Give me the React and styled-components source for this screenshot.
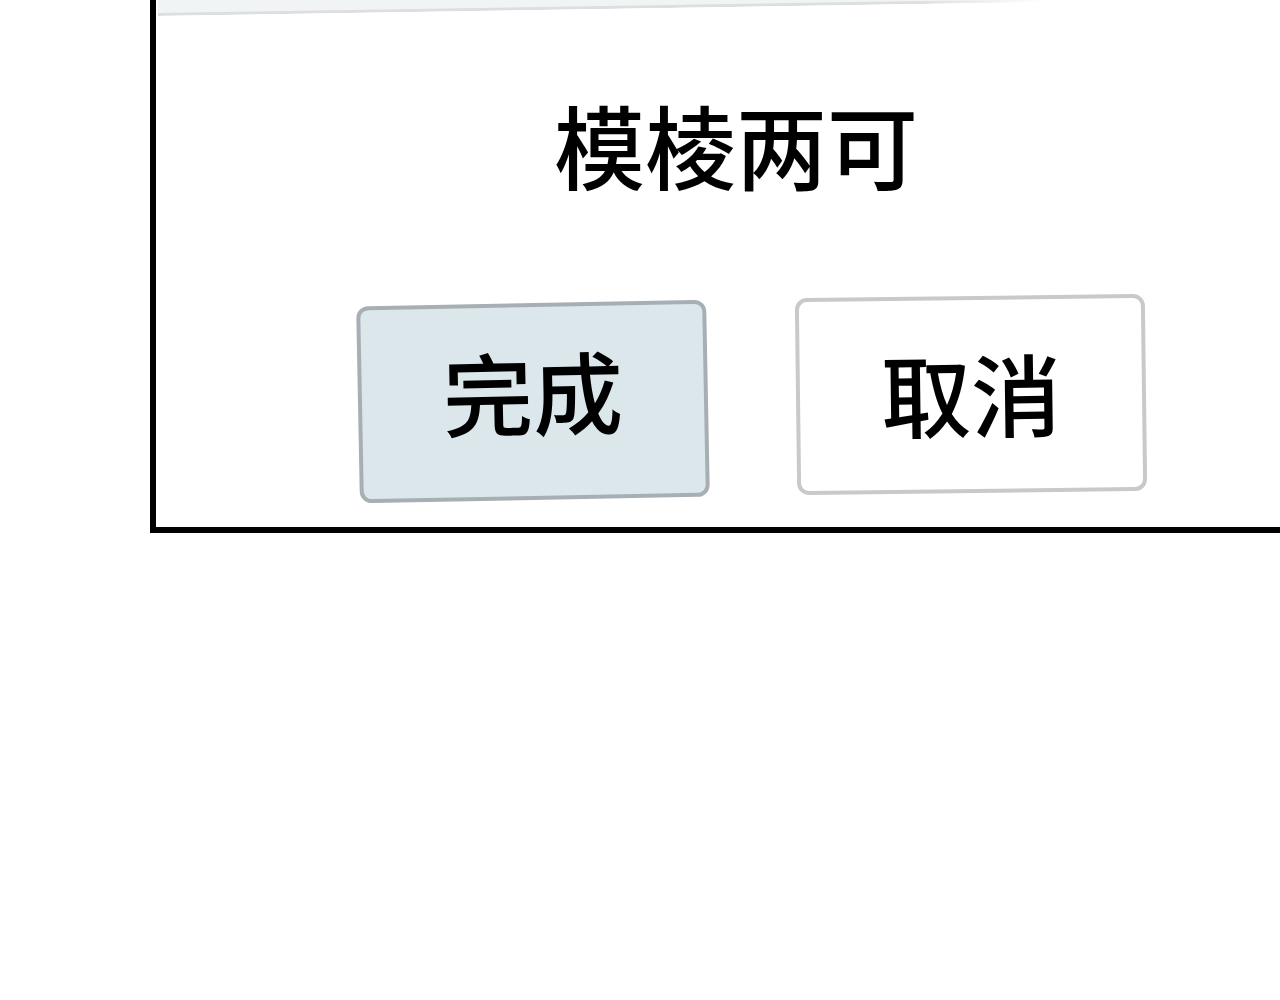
import * as React from "react";
import styled, { createGlobalStyle } from "styled-components";

const GlobalStyle = createGlobalStyle`
  html, body {
    margin: 0;
    padding: 0;
    background: #ffffff;
    overflow: hidden;
  }
  body {
    font-family: "Noto Sans CJK SC", "Noto Sans", sans-serif;
  }
`;

function App() {
  return (
    <>
      <GlobalStyle />
      <Page>
        <Panel>
          {/* bottom edge of the input field above */}
          <FieldEdge />
          <Phrase>模棱两可</Phrase>
          <ButtonRow>
            <ActionButton $primary $tilt={-1.1} $raise={24}>完成</ActionButton>
            <ActionButton $tilt={-0.7} $lift={-7} $raise={6}>取消</ActionButton>
          </ButtonRow>
        </Panel>
      </Page>
    </>
  );
}

const Page = styled.div`
  width: 1280px;
  height: 1000px;
  background: #ffffff;
`;

const Panel = styled.div`
  margin-left: 150px;
  width: 1130px;
  height: 527px;
  border-left: 6px solid #000;
  border-bottom: 6px solid #000;
  display: flex;
  flex-direction: column;
  box-sizing: content-box;
`;

const FieldEdge = styled.div`
  width: 890px;
  height: 14px;
  margin-left: 2px;
  margin-top: -1px;
  background: #f1f4f5;
  border-bottom: 3px solid #dcdedf;
  transform: rotate(-0.9deg);
  transform-origin: left bottom;
  mask-image: linear-gradient(to right, #000 85%, transparent 100%);
`;

const Phrase = styled.h1`
  margin: 82px 0 0 0;
  padding-left: 398px;
  font-size: 91px;
  font-weight: 500;
  line-height: 1;
  color: #000;
  letter-spacing: 0;
`;

const ButtonRow = styled.div`
  display: flex;
  gap: 88px;
  margin-top: 114px;
  padding-left: 202px;
  align-items: flex-start;
`;

const ActionButton = styled.div`
  width: 350px;
  height: 197px;
  box-sizing: border-box;
  border: 4px solid ${(p) => (p.$primary ? "#a7afb4" : "#c9c9c9")};
  background: ${(p) => (p.$primary ? "#dce7ec" : "#ffffff")};
  border-radius: 12px;
  display: flex;
  align-items: center;
  justify-content: center;
  font-size: 90px;
  font-weight: 500;
  color: #000;
  line-height: 1;
  padding-bottom: ${(p) => p.$raise || 0}px;
  transform: translateY(${(p) => p.$lift || 0}px) rotate(${(p) => p.$tilt}deg);
`;

export default App;
